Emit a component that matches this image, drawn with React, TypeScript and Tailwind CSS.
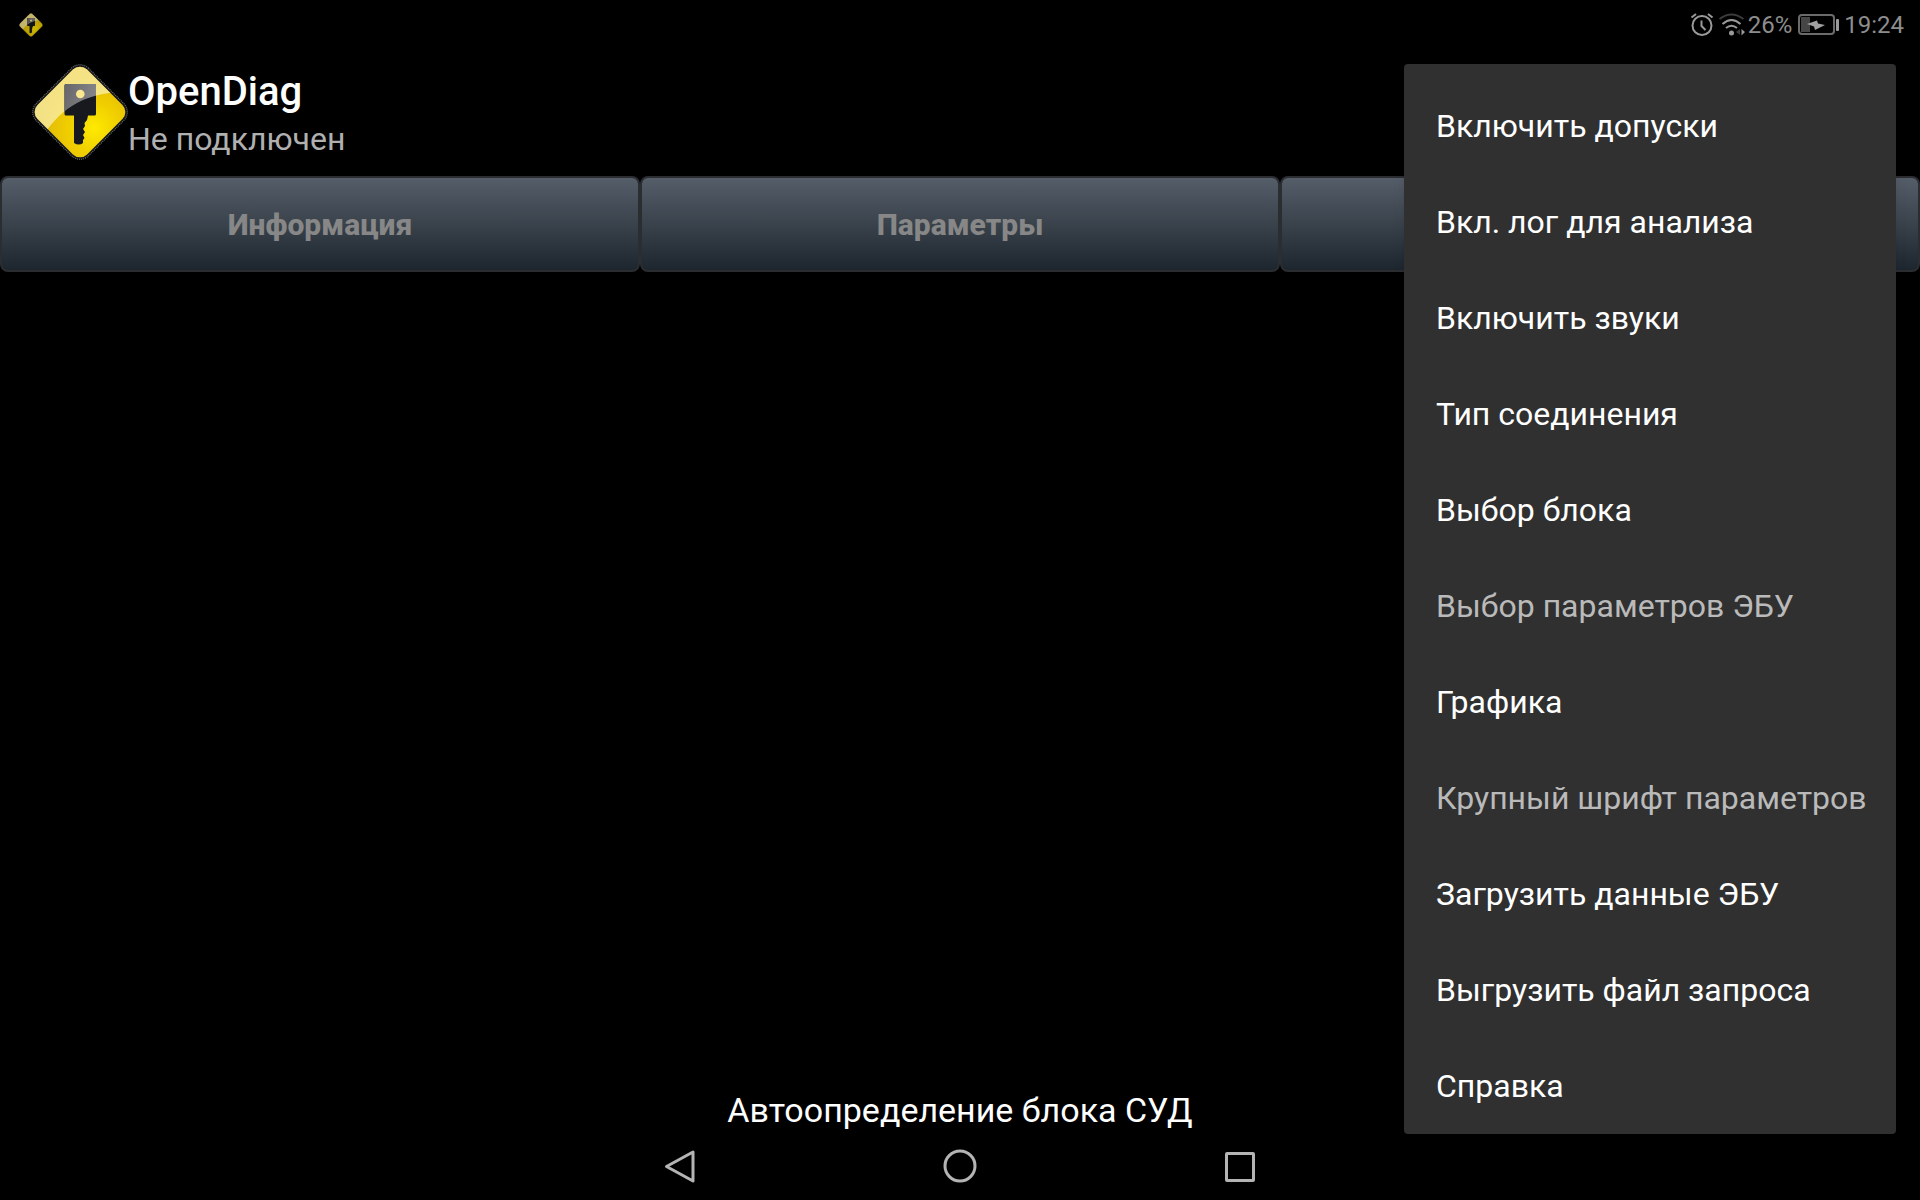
import { FC, useId } from 'react';

interface MenuItem {
  label: string;
  disabled?: boolean;
}

const menuItems: MenuItem[] = [
  { label: 'Включить допуски' },
  { label: 'Вкл. лог для анализа' },
  { label: 'Включить звуки' },
  { label: 'Тип соединения' },
  { label: 'Выбор блока' },
  { label: 'Выбор параметров ЭБУ', disabled: true },
  { label: 'Графика' },
  { label: 'Крупный шрифт параметров', disabled: true },
  { label: 'Загрузить данные ЭБУ' },
  { label: 'Выгрузить файл запроса' },
  { label: 'Справка' },
];

const Logo: FC<{ className: string }> = ({ className }) => {
  const id = useId();
  return (
    <svg viewBox="0 0 96 96" className={className} aria-hidden="true">
      <defs>
        <radialGradient id={`${id}body`} gradientUnits="userSpaceOnUse" cx="62" cy="64" r="54">
          <stop offset="0" stopColor="#ffea00" />
          <stop offset="0.5" stopColor="#efcd00" />
          <stop offset="1" stopColor="#e0b80c" />
        </radialGradient>
        <linearGradient id={`${id}gloss`} gradientUnits="userSpaceOnUse" x1="30" y1="8" x2="46" y2="52">
          <stop offset="0" stopColor="#fff9c4" stopOpacity="0.65" />
          <stop offset="1" stopColor="#fffbd8" stopOpacity="0.6" />
        </linearGradient>
        <linearGradient id={`${id}head`} x1="0" y1="0" x2="1" y2="0.3">
          <stop offset="0" stopColor="#66666a" />
          <stop offset="1" stopColor="#85858a" />
        </linearGradient>
        <clipPath id={`${id}clip`}>
          <rect x="13" y="13" width="70" height="70" rx="10" transform="rotate(45 48 48)" />
        </clipPath>
        <clipPath id={`${id}shine`}>
          <path d="M0 0H96V28C60 28 36 38 15 66L0 80Z" />
        </clipPath>
      </defs>
      <rect x="11" y="11" width="74" height="74" rx="12" transform="rotate(45 48 48)" fill="#16181c" stroke="#777" strokeWidth="1" strokeDasharray="1 1" />
      <g clipPath={`url(#${id}clip)`}>
        <rect width="96" height="96" fill={`url(#${id}body)`} />
        <path d="M0 0H96V28C60 28 36 38 15 66L0 80Z" fill={`url(#${id}gloss)`} />
      </g>
      <path d="M34 20H62.500Q64 20 64 21.500V50Q64 51.500 62.500 51.500H56L55 56L52.500 59L53 62L51 65L53 68L51 71L52.500 74L51 76V79Q47 82 42 79V51.500H34Q32.500 51.500 32.500 50V21.500Q32.500 20 34 20Z" fill="#17191e" />
      <g clipPath={`url(#${id}shine)`}>
        <rect x="32.500" y="20" width="31.500" height="31.500" rx="1.500" fill={`url(#${id}head)`} />
      </g>
      <circle cx="48.300" cy="30" r="4.300" fill="#fbe790" />
    </svg>
  );
};

const StatusBar: FC = () => (
  <div className="flex h-12 items-center justify-between pl-[19px] pr-4 pt-[2px] text-2xl text-[#8d8d8d]">
    <Logo className="size-6 opacity-80" />
    <div className="flex items-center">
      <svg viewBox="0 0 24 24" className="mr-1 size-6" fill="none" stroke="#9a9a9a" strokeWidth="2" aria-hidden="true">
        <circle cx="12" cy="12.500" r="9.500" />
        <path d="M11.500 7.500V13L15.500 17M1.500 4.500L6 1M22.500 4.500L18 1" />
      </svg>
      <svg viewBox="0 0 28 24" className="mr-[2px] h-6 w-7" fill="none" strokeWidth="2" aria-hidden="true">
        <path d="M1.500 6Q13.500 -3 25.500 6" stroke="#3b3b3b" />
        <path d="M4.500 11Q13.500 3 22.500 11M8 15Q13.500 10.500 19 15" stroke="#9a9a9a" />
        <circle cx="13.500" cy="20" r="2.500" fill="#9a9a9a" />
        <path d="M22 16V22L18 19Z" fill="#3b3b3b" />
        <path d="M23.500 16V22.500L27 19Z" fill="#9a9a9a" />
      </svg>
      <span>26%</span>
      <svg viewBox="0 0 42 22" className="mx-[5px] h-[22px] w-[42px]" aria-hidden="true">
        <rect x="2" y="1" width="35" height="19" rx="3" fill="none" stroke="#6b6b6b" strokeWidth="2" />
        <rect x="4" y="3" width="9" height="15" fill="#464646" />
        <rect x="39" y="5" width="3" height="12" rx="1" fill="#9a9a9a" />
        <path d="M10 10L20 6.500L21 9.500L28 11L18 16L17 12.500Z" fill="#a0a0a0" />
      </svg>
      <span>19:24</span>
    </div>
  </div>
);

const tabClass =
  'h-24 flex-1 rounded-lg border-2 border-[#2b2d31] bg-linear-to-b from-[#555d69] via-[#3a434c] to-[#1d262f] text-[30px] font-extrabold text-[#878787]';

const Tabs: FC = () => (
  <div className="flex">
    <button type="button" className={tabClass}>Информация</button>
    <button type="button" className={tabClass}>Параметры</button>
    <button type="button" className={tabClass} aria-label="Ошибки" />
  </div>
);

const Menu: FC = () => (
  <ul className="absolute right-6 top-16 w-[492px] rounded-sm bg-[#303030] pt-[14px] shadow-lg">
    {menuItems.map(({ label, disabled }) => (
      <li key={label}>
        <button
          type="button"
          disabled={disabled}
          className="block h-24 w-full whitespace-nowrap pl-8 text-left text-[32px] text-white disabled:text-[#bababa]"
        >
          {label}
        </button>
      </li>
    ))}
  </ul>
);

const NavBar: FC = () => (
  <nav className="flex h-[68px] items-center justify-center gap-[246px]">
    <button type="button" aria-label="Назад">
      <svg viewBox="0 0 34 34" className="size-[34px]" fill="none" stroke="#b4b4b4" strokeWidth="3" strokeLinejoin="round">
        <path d="M30 3V32L3.500 17.500Z" />
      </svg>
    </button>
    <button type="button" aria-label="Домой">
      <svg viewBox="0 0 34 34" className="size-[34px]" fill="none" stroke="#b4b4b4" strokeWidth="3">
        <circle cx="17" cy="17" r="15" />
      </svg>
    </button>
    <button type="button" aria-label="Недавние">
      <svg viewBox="0 0 34 34" className="size-[34px]" fill="none" stroke="#b4b4b4" strokeWidth="3" strokeLinejoin="round">
        <rect x="3.500" y="4.500" width="27" height="27" rx="0.500" />
      </svg>
    </button>
  </nav>
);

export default function App() {
  return (
    <div className="relative flex min-h-screen flex-col bg-black font-['Roboto',sans-serif]">
      <StatusBar />
      <header className="flex h-32 items-center px-8">
        <Logo className="size-24" />
        <div className="pt-[6px]">
          <h1 className="text-[40px] font-medium leading-[48px] text-white">OpenDiag</h1>
          <p className="text-[32px] leading-[46px] text-[#b0b0b0]">Не подключен</p>
        </div>
      </header>
      <Tabs />
      <main className="flex flex-1 items-end justify-center">
        <p className="text-[34px] leading-[44px] text-white">Автоопределение блока СУД</p>
      </main>
      <NavBar />
      <Menu />
    </div>
  );
}
